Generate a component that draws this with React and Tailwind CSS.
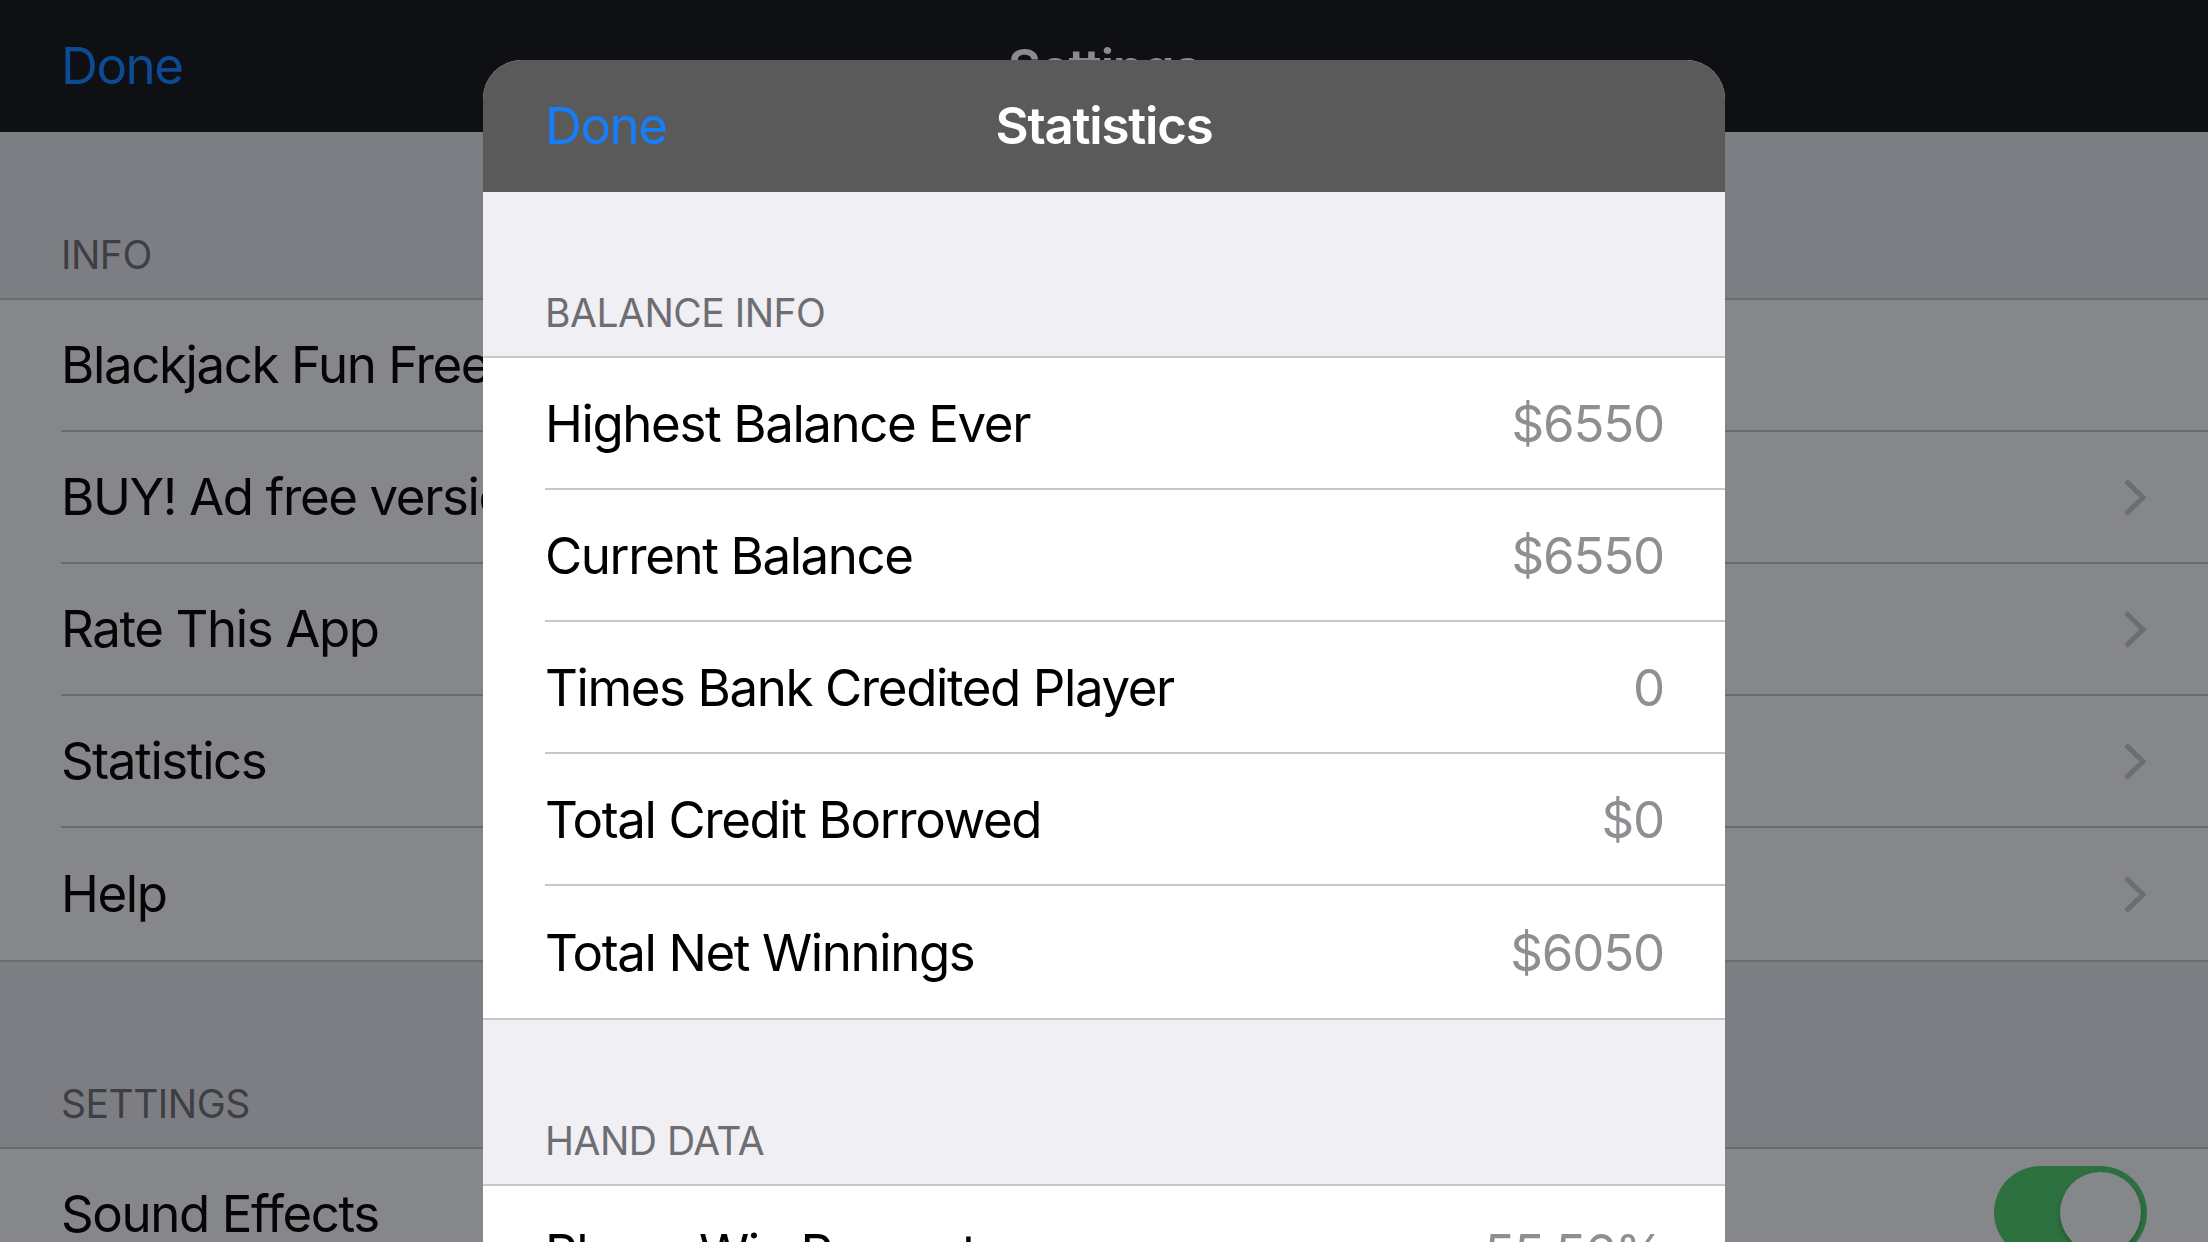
const FONT = { fontFamily: 'Inter, "Noto Sans", "Liberation Sans", sans-serif' };

const BG_ROWS = [
  { label: 'Blackjack Fun Free', chevron: false },
  { label: 'BUY! Ad free version', chevron: true },
  { label: 'Rate This App', chevron: true },
  { label: 'Statistics', chevron: true },
  { label: 'Help', chevron: true },
];

const BALANCE = [
  ['Highest Balance Ever', '$6550'],
  ['Current Balance', '$6550'],
  ['Times Bank Credited Player', '0'],
  ['Total Credit Borrowed', '$0'],
  ['Total Net Winnings', '$6050'],
];

function Chevron() {
  return (
    <svg width="24" height="39" viewBox="0 0 24 39" className="shrink-0">
      <polyline points="3,3 20,19.5 3,36" fill="none" stroke="#6c6d72" strokeWidth="5" strokeLinecap="butt" strokeLinejoin="miter" />
    </svg>
  );
}

// ─── Page derrière (assombrie) ────────────────────────────────────────────────
function SettingsBehind() {
  return (
    <div className="flex flex-col w-full h-full bg-[#7d7e83]">
      <div className="h-[132px] shrink-0 bg-[#0f1014] relative flex items-center pl-[61px] pr-[62px]">
        <span className="text-[51px] text-[#0c4b94] tracking-[-1.4px]">Done</span>
        <span className="absolute left-0 right-0 top-[30px] text-center text-[51px] font-semibold text-[#8b8b8e] tracking-[-1.2px]">Settings</span>
      </div>

      <div className="h-[166px] shrink-0 flex items-end pl-[61px] pb-[14px]">
        <span className="text-[39px] text-[#3e3f43] uppercase tracking-[-0.5px]">Info</span>
      </div>
      <div className="bg-[#86878b] border-t-2 border-b-2 border-[#6b6c70]">
        {BG_ROWS.map((r, i) => (
          <div key={r.label} className="h-[132px] flex pl-[61px]">
            <div className={`flex-1 flex items-center justify-between pr-[61px] ${i < BG_ROWS.length - 1 ? 'border-b-2 border-[#6b6c70]' : ''}`}>
              <span className="text-[51px] text-[#050506] tracking-[-1.4px] whitespace-nowrap">{r.label}</span>
              {r.chevron && <Chevron />}
            </div>
          </div>
        ))}
      </div>

      <div className="h-[185px] shrink-0 flex items-end pl-[61px] pb-[14px]">
        <span className="text-[39px] text-[#3e3f43] uppercase tracking-[-0.5px]">Settings</span>
      </div>
      <div className="bg-[#86878b] border-t-2 border-[#6b6c70]">
        <div className="h-[132px] flex items-start justify-between pl-[61px] pr-[61px]">
          <span className="text-[51px] text-[#050506] tracking-[-1.4px] mt-[27px]">Sound Effects</span>
          <div className="w-[153px] h-[93px] mt-[17px] rounded-full bg-[#2e7140] p-[6px] flex justify-end">
            <div className="w-[81px] h-[81px] rounded-full bg-[#86878b] shadow-[0_3px_6px_rgba(0,0,0,0.25)]" />
          </div>
        </div>
      </div>
    </div>
  );
}

function SectionHeader({ title, height }) {
  return (
    <div className={`${height} shrink-0 flex items-end px-[62px] pb-[14px]`}>
      <span className="text-[39px] text-[#6d6d72] uppercase tracking-[-0.5px]">{title}</span>
    </div>
  );
}

function StatRow({ label, value, last }) {
  return (
    <div className="h-[132px] flex pl-[62px]">
      <div className={`flex-1 flex items-center justify-between pr-[61px] ${last ? '' : 'border-b-2 border-[#c8c7cc]'}`}>
        <span className="text-[51px] text-black tracking-[-1.4px] mt-[2px]">{label}</span>
        <span className="text-[51px] text-[#8e8e93] tracking-[-1.2px] mt-[2px]">{value}</span>
      </div>
    </div>
  );
}

// ─── Feuille modale Statistics ────────────────────────────────────────────────
function StatisticsSheet() {
  return (
    <div className="absolute left-[483px] top-[60px] w-[1242px] h-[1260px] rounded-t-[39px] overflow-hidden bg-[#efeff4] flex flex-col">
      <div className="h-[132px] shrink-0 bg-[#5a5a5a] relative flex items-center px-[62px]">
        <span className="text-[51px] text-[#147efb] tracking-[-1.4px]">Done</span>
        <span className="absolute inset-0 flex items-center justify-center text-[51px] font-semibold text-white tracking-[-1.2px]">Statistics</span>
      </div>

      <SectionHeader title="Balance Info" height="h-[164px]" />
      <div className="bg-white border-t-2 border-b-2 border-[#c8c7cc]">
        {BALANCE.map(([l, v], i) => (
          <StatRow key={l} label={l} value={v} last={i === BALANCE.length - 1} />
        ))}
      </div>

      <SectionHeader title="Hand Data" height="h-[164px]" />
      <div className="bg-white border-t-2 border-[#c8c7cc]">
        <StatRow label="Player Win Percentage" value="55.56%" last />
      </div>
    </div>
  );
}

export default function App() {
  return (
    <div className="w-[2208px] h-[1242px] relative overflow-hidden bg-black" style={FONT}>
      <SettingsBehind />
      <StatisticsSheet />
    </div>
  );
}
